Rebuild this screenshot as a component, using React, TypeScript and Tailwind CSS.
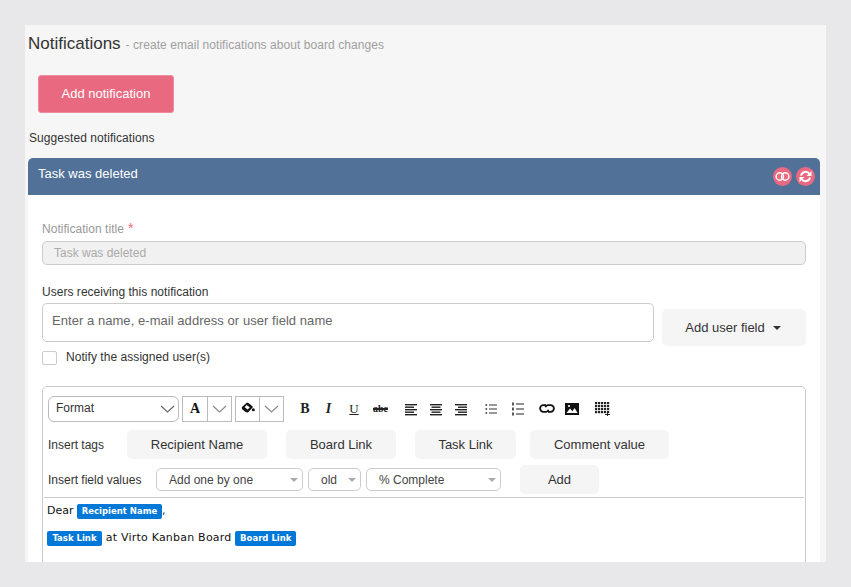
import React from 'react';

const sans = "font-['Liberation_Sans',Arial,sans-serif]";

const Chevron = ({ className }: { className: string }) => (
  <svg width="15" height="8" viewBox="0 0 15 8" fill="none" stroke="currentColor" strokeWidth="1.100" className={className}>
    <path d="M1 1l6.500 6L14 1" />
  </svg>
);

const Lines = ({ kind }: { kind: 'left' | 'center' | 'right' }) => {
  const rows = [2, 4.500, 7, 9.500, 12];
  const w = [12, 9, 12, 9, 12];
  return (
    <svg width="12" height="14" viewBox="0 0 12 14" className="text-[#222]">
      {rows.map((y, i) => {
        const x = kind === 'left' ? 0 : kind === 'right' ? 12 - w[i] : (12 - w[i]) / 2;
        return <rect key={y} x={x} y={y} width={w[i]} height="1.400" fill="currentColor" />;
      })}
    </svg>
  );
};

const BulletList = () => (
  <svg width="12" height="12" viewBox="0 0 12 12" className="text-[#333]">
    {[2, 6, 10].map(y => (
      <g key={y}>
        <rect x="0.500" y={y - 0.800} width="1.600" height="1.600" fill="currentColor" />
        <rect x="4" y={y - 0.500} width="8" height="1" fill="currentColor" />
      </g>
    ))}
  </svg>
);

const NumberList = () => (
  <svg width="13" height="14" viewBox="0 0 13 14" className="text-[#222]">
    {[2, 7, 12].map(y => (
      <g key={y}>
        <rect x="1" y={y - 1.500} width="2" height="3" fill="currentColor" opacity="0.75" />
        <rect x="5" y={y - 0.500} width="8" height="1" fill="currentColor" />
      </g>
    ))}
  </svg>
);

const LinkIcon = () => (
  <svg width="16" height="9" viewBox="0 0 16 9" fill="none" stroke="#111" strokeWidth="1.800">
    <path d="M7 1.200H4.400a3.300 3.300 0 0 0 0 6.600h2.800a3 3 0 0 0 2.400-2" />
    <path d="M9 7.800h2.600a3.300 3.300 0 0 0 0-6.600H8.800a3 3 0 0 0-2.400 2" />
  </svg>
);

const ImageIcon = () => (
  <svg width="14" height="12" viewBox="0 0 14 12">
    <path fill="#111" d="M0 0h14v12H0z" />
    <path fill="#fff" d="M1.500 10l3.500-4.500 2.400 2.800L9.600 5l3 5z" />
    <circle cx="4" cy="3" r="1.100" fill="#fff" />
  </svg>
);

const TableIcon = () => (
  <svg width="15" height="14" viewBox="0 0 15 14" fill="#222">
    {[0, 3, 6, 9].flatMap(y =>
      [0, 3, 6, 9, 12].map(x => <rect key={`${x}-${y}`} x={x} y={y} width="2.200" height="2.200" />)
    )}
    <rect x="10" y="12" width="5" height="1" />
    <rect x="12" y="10.500" width="1" height="3.500" />
  </svg>
);

const FillIcon = () => (
  <svg width="14" height="11" viewBox="0 0 14 11">
    <path fill="#111" d="M6 .5c1 0 5 3 6 4.500l-4.500 5c-1 .8-2 .5-3 0L1.500 7.500C.5 6.500.5 5.500 1.500 4.500z" />
    <path fill="#fff" d="M5.500 3l3.300 2.200-2 2.300L3.600 5.300z" />
    <circle cx="12.300" cy="7.800" r="1.500" fill="#111" />
  </svg>
);

const SelectBox = ({ label, className }: { label: string; className: string }) => (
  <div className={`h-[23px] border border-[#ccc] rounded-[5px] bg-white flex items-center justify-between pl-3 pr-[4px] text-xs text-[#444] ${className}`}>
    <span>{label}</span>
    <span className="w-0 h-0 border-x-[4px] border-x-transparent border-t-[4px] border-t-[#aaa]" />
  </div>
);

const TagButton = ({ label, className }: { label: string; className: string }) => (
  <button className={`h-[29px] bg-[#f5f5f5] rounded-[5px] text-[13px] text-[#333] ${className}`}>{label}</button>
);

const Chip = ({ label, className }: { label: string; className: string }) => (
  <span className={`inline-block bg-[#0078d7] text-white rounded-[2px] text-center h-[15px] leading-[15px] text-[8.500px] font-bold align-middle ${className}`}>{label}</span>
);

export default function App() {
  return (
    <div className={`w-[851px] h-[587px] bg-[#e8e8ea] pt-[25px] pl-[25px] overflow-hidden ${sans}`}>
      <div className="w-[801px] h-[537px] bg-[#f6f6f6] pl-[3px] overflow-hidden">
        <div className="h-[37px] flex items-baseline pt-[6px]">
          <span className="text-[17px] text-[#333]">Notifications</span>
          <span className="text-xs text-[#a0a0a0] ml-[5px] tracking-[0.06px]">- create email notifications about board changes</span>
        </div>

        <button className="ml-[10px] mt-[13px] w-[136px] h-[38px] bg-[#e96a80] rounded-[3px] text-white text-[13px] block border border-[#ee8b9c]">
          Add notification
        </button>

        <p className="text-xs text-[#333] mt-[17px] h-[16px] leading-[16px] tracking-[0.06px] pl-px">Suggested notifications</p>

        <div className="mt-[12px] w-[792px] bg-white rounded-t-[5px]">
          <div className="h-[37px] bg-[#517198] rounded-t-[5px] flex justify-between pl-[10px] pr-[5px]">
            <span className="text-[13px] text-white leading-[16px] pt-[8px]">Task was deleted</span>
            <div className="flex gap-[4px] pt-[9px]">
              <span className="w-[19px] h-[19px] rounded-full bg-[#e96a80] flex items-center justify-center">
                <svg width="15" height="9" viewBox="0 0 15 9" fill="none" stroke="#fff" strokeWidth="1.400">
                  <circle cx="4.800" cy="4.500" r="3.700" />
                  <circle cx="10.200" cy="4.500" r="3.700" />
                </svg>
              </span>
              <span className="w-[19px] h-[19px] rounded-full bg-[#e96a80] flex items-center justify-center">
                <svg width="13" height="13" viewBox="0 0 13 13" fill="none" stroke="#fff" strokeWidth="2">
                  <path d="M2 5.500a4.700 4.700 0 0 1 8.500-1.500" />
                  <path d="M11 7.500a4.700 4.700 0 0 1-8.500 1.500" />
                  <path fill="#fff" stroke="none" d="M12.500 1v5h-5zM.5 12V7h5z" />
                </svg>
              </span>
            </div>
          </div>

          <div className="px-[14px] pt-[26px]">
            <label className="flex text-xs text-[#999] h-[16px] leading-[16px] tracking-[0.03px]">
              Notification title
              <span className="text-[#e96a80] text-[14px] ml-[4px] -mt-[1px]">*</span>
            </label>
            <div className="mt-[4px] h-[24px] bg-[#f1f1f1] border border-[#ccc] rounded-[5px] pl-[11px] flex items-center text-xs text-[#aaa]">
              Task was deleted
            </div>

            <label className="block text-xs text-[#333] mt-[19px] h-[16px] leading-[16px] tracking-[0.03px]">Users receiving this notification</label>
            <div className="flex gap-[8px] mt-[3px] h-[43px]">
              <div className="w-[612px] h-[39px] bg-white border border-[#ccc] rounded-[5px] pl-[9px] pb-[3px] flex items-center text-[13px] text-[#666] tracking-[0.05px]">
                Enter a name, e-mail address or user field name
              </div>
              <button className="mt-[6px] w-[144px] h-[37px] bg-[#f5f5f5] rounded-[5px] text-[13px] text-[#333] flex items-center justify-center gap-[8px] pr-[2px]">
                Add user field
                <span className="w-0 h-0 border-x-[4px] border-x-transparent border-t-[4px] border-t-[#333]" />
              </button>
            </div>

            <div className="flex items-center mt-[5px] h-[14px]">
              <span className="w-[15px] h-[14px] border border-[#ccc] rounded-[2px] bg-white" />
              <span className="ml-[9px] text-xs text-[#333] -mt-[2px] tracking-[0.05px]">Notify the assigned user(s)</span>
            </div>

            <div className="mt-[21px] border border-[#ccc] rounded-t-[5px] h-[181px] pl-[1px] pr-[1px]">
              <div className="flex items-center pl-[4px] pt-[8px] h-[35px]">
                <div className="w-[131px] h-[26px] border border-[#bbb] rounded-[6px] flex items-center justify-between pl-[7px] pr-[3px] pb-[2px] text-xs text-[#333]">
                  Format
                  <Chevron className="text-[#666] mt-[2px]" />
                </div>
                <div className="ml-[3px] w-[50px] h-[26px] border border-[#bbb] flex">
                  <span className="w-[25px] flex items-center justify-center font-['Liberation_Serif',serif] font-bold text-[14px] text-[#111] border-r border-[#bbb]">A</span>
                  <span className="flex-1 flex items-center justify-center"><Chevron className="text-[#888]" /></span>
                </div>
                <div className="ml-[3px] w-[49px] h-[26px] border border-[#bbb] flex">
                  <span className="w-[24px] flex items-center justify-center border-r border-[#bbb] pb-[2px]"><FillIcon /></span>
                  <span className="flex-1 flex items-center justify-center"><Chevron className="text-[#888]" /></span>
                </div>
                <div className="flex items-center h-[26px] font-['Liberation_Serif',serif] text-[#222] text-[14px]">
                  <span className="ml-[16px] w-[10px] font-bold text-center">B</span>
                  <span className="ml-[15px] w-[7px] font-bold italic text-center">I</span>
                  <span className="ml-[16px] w-[12px] underline text-center text-[13px]">U</span>
                  <span className="ml-[13px] w-[15px] line-through decoration-2 font-bold text-[10px] text-center">abc</span>
                </div>
                <div className="flex items-center h-[26px] ml-[17px] gap-[13px]">
                  <Lines kind="left" />
                  <Lines kind="center" />
                  <Lines kind="right" />
                </div>
                <div className="ml-[18px]"><BulletList /></div>
                <div className="ml-[14px]"><NumberList /></div>
                <div className="ml-[15px]"><LinkIcon /></div>
                <div className="ml-[10px]"><ImageIcon /></div>
                <div className="ml-[16px]"><TableIcon /></div>
              </div>

              <div className="flex items-center h-[29px] mt-[8px] pl-[4px]">
                <span className="w-[79px] text-xs text-[#333]">Insert tags</span>
                <TagButton label="Recipient Name" className="w-[140px]" />
                <TagButton label="Board Link" className="ml-[19px] w-[110px]" />
                <TagButton label="Task Link" className="ml-[19px] w-[101px]" />
                <TagButton label="Comment value" className="ml-[14px] w-[139px]" />
              </div>

              <div className="flex items-center h-[29px] mt-[6px] pl-[4px]">
                <span className="w-[108px] text-xs text-[#333]">Insert field values</span>
                <SelectBox label="Add one by one" className="w-[147px]" />
                <SelectBox label="old" className="ml-[5px] w-[53px]" />
                <SelectBox label="% Complete" className="ml-[5px] w-[135px]" />
                <TagButton label="Add" className="ml-[19px] w-[79px]" />
              </div>

              <div className="mt-[3px] border-t border-[#ccc] pl-[3px] pt-[5px] font-['DejaVu_Sans',Verdana,sans-serif] text-[11px] text-[#111]">
                <p className="h-[16px] leading-[16px]">Dear <Chip label="Recipient Name" className="w-[85px]" />,</p>
                <p className="mt-[11px] h-[16px] leading-[16px] tracking-[0.22px]">
                  <Chip label="Task Link" className="w-[55px] tracking-normal" /> at Virto Kanban Board <Chip label="Board Link" className="w-[61px] tracking-normal" />
                </p>
              </div>
            </div>
          </div>
        </div>
      </div>
    </div>
  );
}
